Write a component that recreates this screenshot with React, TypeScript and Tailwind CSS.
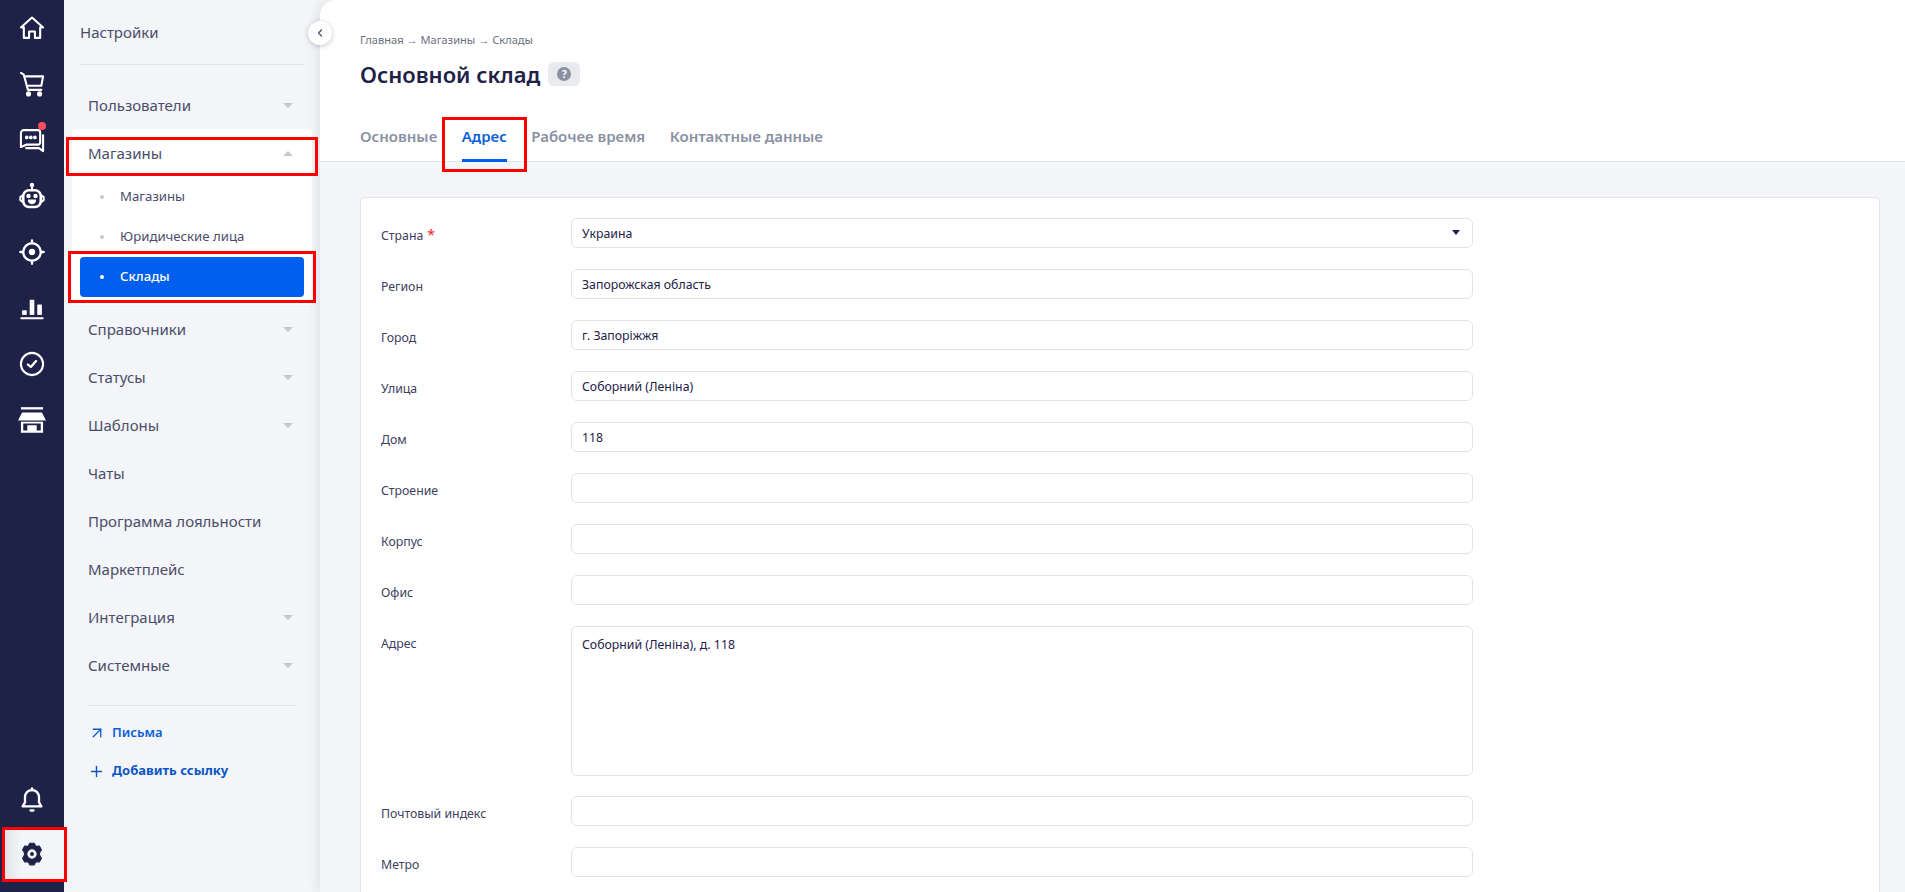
import React from "react";
import { ArrowUpRight, ChevronLeft, Plus } from "lucide-react";

const font = "font-['Noto_Sans',sans-serif]";

const Triangle = ({ up }: { up?: boolean }) => (
  <span className={`w-0 h-0 border-x-[5px] border-x-transparent ${up ? "border-b-[5px] border-b-[#c3c8d2]" : "border-t-[5px] border-t-[#c3c8d2]"}`}></span>
);

const RailIcon = ({ children }: { children: React.ReactNode }) => (
  <div className="h-14 flex items-center justify-center text-white">{children}</div>
);

const svgProps = { width: 28, height: 28, viewBox: "0 0 24 24", fill: "none", stroke: "currentColor", strokeWidth: 1.8, strokeLinecap: "round" as const, strokeLinejoin: "round" as const };

const HomeIcon = () => (
  <svg {...svgProps}><path d="M12 3 2.500 11.500H5V20.500H9.500V15H14.500V20.500H19V11.500H21.500Z" /></svg>
);
const CartIcon = () => (
  <svg {...svgProps}><path d="M2.500 2.500 5 4l3.500 13H20" /><path d="M5.500 5.500H21.500L20 13.500H7.500" /><circle cx="9" cy="20.500" r="1.300" fill="currentColor" /><circle cx="18.500" cy="20.500" r="1.300" fill="currentColor" /></svg>
);
const ChatIcon = () => (
  <svg {...svgProps}><path d="M5 3.500H17a2 2 0 0 1 2 2V14a2 2 0 0 1-2 2H7l-4.500 2V6a2.500 2.500 0 0 1 2.500-2.500z" /><path d="M21.500 8V21.500L18 19H7" /><circle cx="7.500" cy="9.800" r=".7" fill="currentColor" /><circle cx="11" cy="9.800" r=".7" fill="currentColor" /><circle cx="14.500" cy="9.800" r=".7" fill="currentColor" /></svg>
);
const RobotIcon = () => (
  <svg {...svgProps}><circle cx="12" cy="2.500" r="1" fill="currentColor" /><path d="M12 4v3" /><rect x="4.500" y="7" width="15" height="14.500" rx="5" strokeWidth={2.200} /><path d="M4 11.500 2 13v2.500l2 1.500M20 11.500l2 1.500v2.500L20 17" /><circle cx="9" cy="12" r="1" fill="currentColor" /><circle cx="15" cy="12" r="1" fill="currentColor" /><path d="M9 15.500h6a3 3 0 0 1-6 0z" fill="currentColor" strokeWidth={1} /></svg>
);
const TargetIcon = () => (
  <svg {...svgProps}><circle cx="12" cy="12" r="7.500" strokeWidth={2} /><circle cx="12" cy="12" r="1.800" fill="currentColor" /><path d="M12 2v2M12 20v2M2 12h2M20 12h2" strokeWidth={2} /></svg>
);
const ChartIcon = () => (
  <svg width="28" height="28" viewBox="0 0 24 24" fill="currentColor"><rect x="2" y="20" width="20" height="1.600" rx=".8" /><rect x="3.500" y="14" width="4" height="4" rx=".7" /><rect x="10" y="5" width="4" height="13" rx=".7" /><rect x="16.500" y="9" width="4" height="9" rx=".7" /></svg>
);
const CheckIcon = () => (
  <svg {...svgProps}><circle cx="12" cy="12" r="9.500" /><path d="m8.500 12.500 2.500 2 4.500-5" strokeWidth={2} /></svg>
);
const StoreIcon = () => (
  <svg width="28" height="28" viewBox="0 0 24 24" fill="currentColor"><rect x="2.500" y="1" width="19" height="2" /><path d="M3.500 5.500h17L24 12.500H0z" /><path fillRule="evenodd" d="M2.500 13.500h19v9.500h-19zM4.500 15v6h3.500v-4.500h8V21h3.500v-6z" /></svg>
);
const BellIcon = () => (
  <svg {...svgProps}><path d="M12 3.500a5.800 5.800 0 0 0-6 6V14l-2 3.500h16L18 14V9.500a5.800 5.800 0 0 0-6-6z" strokeWidth={2} /><path d="M10.800 21h2.400" strokeWidth={2} /><path d="M12 2v1.500" strokeWidth={2} /></svg>
);
const GearIcon = () => (
  <svg width="26" height="26" viewBox="0 0 24 24" fill="#1e2148" stroke="#1e2148" strokeWidth={1} strokeLinejoin="round"><path fillRule="evenodd" d="M14 2l1.500 2.800 3.200-.1 2 3.400-1.700 2.700v2.400l1.700 2.700-2 3.400-3.200-.1L14 22h-4l-1.500-2.800-3.200.1-2-3.400L5 13.200v-2.400L3.300 8.100l2-3.400 3.200.1L10 2zM12 7.200a4.800 4.800 0 1 0 0 9.600 4.800 4.800 0 0 0 0-9.600z" /><circle cx="12" cy="12" r="1.800" stroke="none" /></svg>
);

const SideItem = ({ label, arrow = false }: { label: string; arrow?: boolean }) => (
  <div className="h-12 pl-6 pr-[27px] flex items-center justify-between text-[15px] whitespace-nowrap text-[#4a4d6a]">
    <span>{label}</span>
    {arrow && <Triangle />}
  </div>
);

const SubItem = ({ label, active = false }: { label: string; active?: boolean }) => (
  <div className={`mx-2 h-10 pl-5 flex items-center gap-4 text-[13.2px] rounded ${active ? "bg-[#0060ed] text-white font-medium" : "text-[#4a4d6a]"}`}>
    <span className={`w-1 h-1 rounded-full ${active ? "bg-white" : "bg-[#c3c8d2]"}`}></span>
    {label}
  </div>
);

const fields: { label: string; value: string; required?: boolean; select?: boolean; tall?: boolean }[] = [
  { label: "Страна", value: "Украина", required: true, select: true },
  { label: "Регион", value: "Запорожская область" },
  { label: "Город", value: "г. Запоріжжя" },
  { label: "Улица", value: "Соборний (Леніна)" },
  { label: "Дом", value: "118" },
  { label: "Строение", value: "" },
  { label: "Корпус", value: "" },
  { label: "Офис", value: "" },
  { label: "Адрес", value: "Соборний (Леніна), д. 118", tall: true },
  { label: "Почтовый индекс", value: "" },
  { label: "Метро", value: "" },
];

const RedBox = ({ className }: { className: string }) => (
  <div className={`absolute border-[3px] border-[#f00] z-20 pointer-events-none ${className}`}></div>
);

export default function App() {
  return (
    <div className={`${font} relative h-screen w-full flex overflow-hidden bg-[#f4f5f8] text-[#1e2148]`}>
      {/* RAIL */}
      <div className="w-16 shrink-0 bg-[#1e2148] flex flex-col justify-between">
        <div>
          <RailIcon><HomeIcon /></RailIcon>
          <RailIcon><CartIcon /></RailIcon>
          <RailIcon>
            <div className="relative flex">
              <ChatIcon />
              <span className="absolute -top-1 right-0 w-2 h-2 rounded-full bg-[#ff4d5e]"></span>
            </div>
          </RailIcon>
          <RailIcon><RobotIcon /></RailIcon>
          <RailIcon><TargetIcon /></RailIcon>
          <RailIcon><ChartIcon /></RailIcon>
          <RailIcon><CheckIcon /></RailIcon>
          <RailIcon><StoreIcon /></RailIcon>
        </div>
        <div className="pb-3">
          <div className="h-14 flex items-center justify-center text-white"><BellIcon /></div>
          <div className="h-[52px] ml-[3px] flex items-center justify-center bg-gradient-to-r from-[#dfe1e7] via-[#f4f5f8] via-30% to-[#f4f5f8] pr-[3px]"><GearIcon /></div>
        </div>
      </div>

      {/* SETTINGS MENU */}
      <div className="w-64 shrink-0 relative">
        <div className="mx-4 mt-px h-16 flex items-center border-b border-[#dfe2e9] text-[15px] text-[#4a4d6a] leading-none">Настройки</div>
        <div className="mt-4">
          <SideItem label="Пользователи" arrow />
          <div className="mx-2 pb-2 bg-white rounded">
            <div className="h-12 pl-4 pr-[19px] flex items-center justify-between text-[15px] text-[#4a4d6a]">
              <span>Магазины</span>
              <Triangle up />
            </div>
            <SubItem label="Магазины" />
            <SubItem label="Юридические лица" />
            <SubItem label="Склады" active />
          </div>
          <SideItem label="Справочники" arrow />
          <SideItem label="Статусы" arrow />
          <SideItem label="Шаблоны" arrow />
          <SideItem label="Чаты" />
          <SideItem label="Программа лояльности" />
          <SideItem label="Маркетплейс" />
          <SideItem label="Интеграция" arrow />
          <SideItem label="Системные" arrow />
        </div>
        <div className="mx-6 mt-4 border-t border-[#dfe2e9]"></div>
        <div className="mx-6 mt-[9px] h-9 flex items-center gap-1.5 text-[13px] font-semibold text-[#0b5fd6]">
          <ArrowUpRight size={18} strokeWidth={1.8} /> Письма
        </div>
        <div className="mx-6 mt-0.5 h-9 flex items-center gap-[7px] text-[13px] font-bold text-[#0b55c4]">
          <Plus size={17} strokeWidth={2} /> Добавить ссылку
        </div>
      </div>

      {/* MAIN */}
      <div className="relative flex-1 min-w-0 bg-[#f4f5f7] rounded-tl-2xl shadow-[-4px_0_10px_rgba(30,33,72,0.08)]">
        <button className="absolute -left-3 top-[21px] w-6 h-6 rounded-full bg-white shadow-[0_1px_5px_rgba(30,33,72,0.25)] flex items-center justify-center z-10">
          <ChevronLeft size={12} strokeWidth={2.5} className="text-[#4a4d6a]" />
        </button>

        <div className="bg-white rounded-tl-2xl border-b border-[#e3e5ea] h-[162px] pl-10 pt-8">
          <div className="text-[11.1px] leading-4 text-[#6c7080]">Главная → Магазины → Склады</div>
          <div className="mt-[10px] flex items-center gap-2 h-8">
            <h1 className="text-[22px] font-semibold leading-8 text-[#1e2148]">Основной склад</h1>
            <span className="w-8 h-6 rounded-md bg-[#e8eaee] flex items-center justify-center">
              <span className="w-3.5 h-3.5 rounded-full bg-[#8a91a3] text-white text-[10px] font-bold leading-none flex items-center justify-center">?</span>
            </span>
          </div>
          <div className="mt-[22px] flex gap-[24.5px] text-[15px] font-semibold text-[#8a91a3] h-12">
            <span className="leading-12">Основные</span>
            <span className="leading-12 text-[#0b5fd6] border-b-[3px] border-[#0060ed] h-[50px]">Адрес</span>
            <span className="leading-12">Рабочее время</span>
            <span className="leading-12">Контактные данные</span>
          </div>
        </div>

        <div className="ml-10 mr-[25px] mt-[35px] bg-white border border-[#e3e5ea] rounded pl-5 pt-5 pb-5">
          <div className="flex flex-col gap-[21px]">
            {fields.map((f) => (
              <div key={f.label} className={`flex items-start ${f.tall ? "-mb-px" : ""}`}>
                <div className="w-[190px] shrink-0 text-[12.3px] leading-[18px] pt-[9px] text-[#3d4060]">
                  {f.label}
                  {f.required && <span className="text-[#f5222d] text-sm leading-none ml-1">*</span>}
                </div>
                <div className={`w-[902px] border border-[#e1e3e9] rounded-md px-2.5 text-[12.3px] text-[#1e2148] relative ${f.tall ? "h-[150px] pt-[9px] leading-[18px]" : "h-[30px] leading-[29px]"}`}>
                  {f.value}
                  {f.select && <span className="absolute right-3 top-[11px] w-0 h-0 border-x-4 border-x-transparent border-t-[5px] border-t-[#1e2148]"></span>}
                </div>
              </div>
            ))}
          </div>
        </div>
      </div>

      {/* ANNOTATIONS */}
      <RedBox className="left-[66px] top-[137px] w-[252px] h-[39px]" />
      <RedBox className="left-[68px] top-[251px] w-[248px] h-[52px]" />
      <RedBox className="left-[442px] top-[117px] w-[85px] h-[55px]" />
      <RedBox className="left-[2px] top-[827px] w-[65px] h-[55px]" />
    </div>
  );
}
